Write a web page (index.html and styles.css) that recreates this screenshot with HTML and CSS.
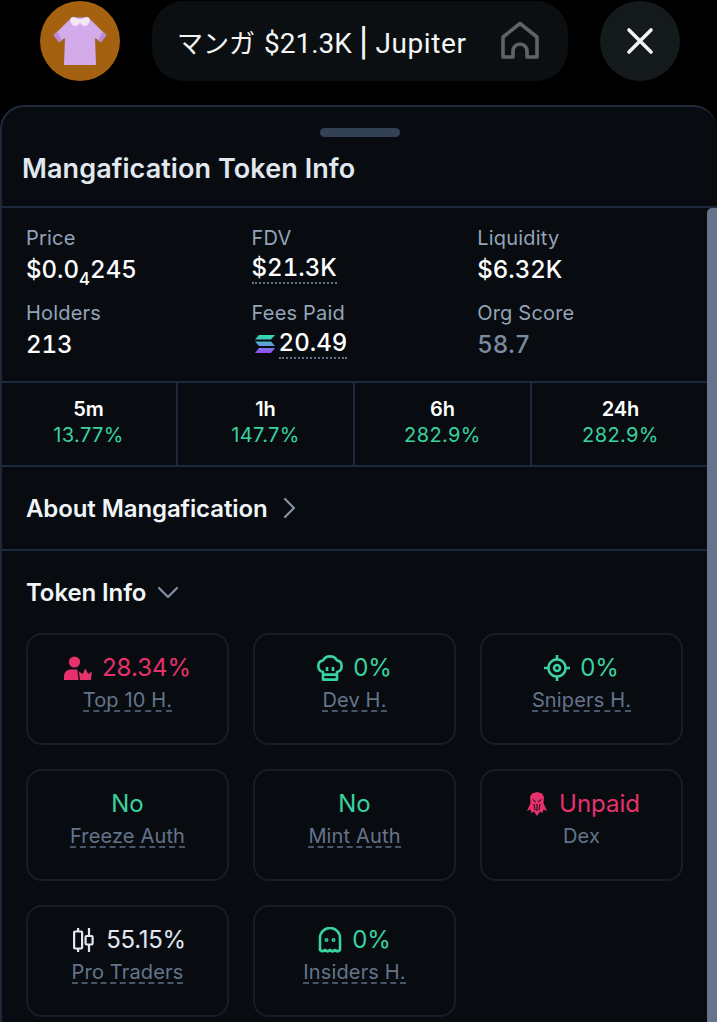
FILE: index.html
```html
<!DOCTYPE html>
<html lang="en">

<head>
    <meta charset="UTF-8">
    <meta name="viewport" content="width=device-width, initial-scale=1.0">
    <title>Mangafication Token Info</title>
    <link rel="stylesheet" href="styles.css">
</head>

<body>
    <div class="topbar">
        <div class="avatar">
            <svg width="60" height="60" viewBox="0 0 60 60">
                <path d="M19 9 L41 9 L56 24 L51 31 L45 27 L46 53 Q46 54 45 54 L15 54 Q14 54 14 53 L15 27 L9 31 L4 24 Z" fill="#d3aaea"/>
                <path d="M3.5 24 L9 31.5 L12 29.5 L7 20.5 Z M56.5 24 L51 31.5 L48 29.5 L53 20.5 Z" fill="#b98ad6"/>
                <path d="M22 6 H38 V10 H22 Z" fill="#a77bc4"/>
                <path d="M20 8 Q21 6 24 6 Q30 9 36 6 Q39 6 40 8 Q39 15 35 15 Q32 15 30 11.5 Q28 15 25 15 Q21 15 20 8 Z" fill="#f1e8f6"/>
            </svg>
        </div>
        <div class="title-pill">
            <span class="pill-text"><span class="pill-kana">マンガ</span> $21.3K <span class="pill-sep">|</span> <span class="pill-site">Jupiter</span></span>
            <svg class="home-icon" width="40" height="40" viewBox="0 0 40 40" fill="none" stroke="#5f6363" stroke-width="3.6">
                <path d="M3 36 V16 L20 2.5 L37 16 V36 H27 V30 A7 7 0 0 0 13 30 V36 Z" stroke-linejoin="round"/>
            </svg>
        </div>
        <div class="close-btn">
            <svg width="28" height="28" viewBox="0 0 28 28" stroke="#f2f5f5" stroke-width="3.6" stroke-linecap="round">
                <path d="M3 3 L25 25 M25 3 L3 25"/>
            </svg>
        </div>
    </div>

    <div class="sheet">
        <div class="scroll-thumb"></div>
        <div class="sheet-head">
            <div class="handle"></div>
            <h2 class="sheet-title">Mangafication Token Info</h2>
        </div>

        <div class="stats">
            <div class="stat">
                <div class="stat-label">Price</div>
                <div class="stat-value">$0.0<sub>4</sub>245</div>
            </div>
            <div class="stat">
                <div class="stat-label">FDV</div>
                <div class="stat-value"><span class="dotted">$21.3K</span></div>
            </div>
            <div class="stat">
                <div class="stat-label">Liquidity</div>
                <div class="stat-value">$6.32K</div>
            </div>
            <div class="stat">
                <div class="stat-label">Holders</div>
                <div class="stat-value">213</div>
            </div>
            <div class="stat">
                <div class="stat-label">Fees Paid</div>
                <div class="stat-value">
                    <svg class="sol-icon" width="20" height="18" viewBox="0 0 20 18">
                        <defs>
                            <linearGradient id="solGrad" x1="0" y1="0" x2="0" y2="1">
                                <stop offset="0" stop-color="#2fe0b0"/>
                                <stop offset="0.5" stop-color="#5aa5d0"/>
                                <stop offset="1" stop-color="#9a45f5"/>
                            </linearGradient>
                        </defs>
                        <path d="M4 0 H20 L16 4.5 H0 Z M0 6.5 H16 L20 11 H4 Z M4 13 H20 L16 18 H0 Z" fill="url(#solGrad)"/>
                    </svg><span class="dotted">20.49</span>
                </div>
            </div>
            <div class="stat">
                <div class="stat-label">Org Score</div>
                <div class="stat-value muted">58.7</div>
            </div>
        </div>

        <div class="changes">
            <div class="change">
                <div class="change-time">5m</div>
                <div class="change-pct">13.77%</div>
            </div>
            <div class="change">
                <div class="change-time">1h</div>
                <div class="change-pct">147.7%</div>
            </div>
            <div class="change">
                <div class="change-time">6h</div>
                <div class="change-pct">282.9%</div>
            </div>
            <div class="change">
                <div class="change-time">24h</div>
                <div class="change-pct">282.9%</div>
            </div>
        </div>

        <div class="about">
            <span>About Mangafication</span>
            <svg width="14" height="22" viewBox="0 0 14 22" fill="none" stroke="#8490a3" stroke-width="2.2" stroke-linecap="round" stroke-linejoin="round">
                <path d="M3 2 L12 11 L3 20"/>
            </svg>
        </div>

        <div class="token-info">
            <div class="token-head">
                <span>Token Info</span>
                <svg width="22" height="14" viewBox="0 0 22 14" fill="none" stroke="#8490a3" stroke-width="2.2" stroke-linecap="round" stroke-linejoin="round">
                    <path d="M2 3 L11 12 L20 3"/>
                </svg>
            </div>

            <div class="cards">
                <div class="card">
                    <div class="card-value pink">
                        <svg width="28" height="24" viewBox="0 0 28 24" fill="currentColor">
                            <circle cx="10.5" cy="6" r="5.6"/>
                            <path d="M0 24 V20.5 Q0 14.5 6 13.5 L13 13.5 Q14 14.5 13.6 16 L14.6 24 Z"/>
                            <path d="M16 24 L14.8 15.5 L18.6 18 L21.4 12.5 L24.2 18 L28 15.5 L26.8 24 Z"/>
                        </svg>
                        28.34%
                    </div>
                    <div class="card-label"><span class="dashed">Top 10 H.</span></div>
                </div>
                <div class="card">
                    <div class="card-value green">
                        <svg width="26" height="26" viewBox="0 0 26 26" fill="none" stroke="currentColor" stroke-width="2.6" stroke-linejoin="round">
                            <path d="M6 17 Q1 16 1.4 10.5 Q1.6 6 6 5.5 Q8 1.4 13 1.4 Q18 1.4 20 5.5 Q24.4 6 24.6 10.5 Q25 16 20 17 V24.6 H6 Z"/>
                            <path d="M6 19.6 H20 M10 12 V16 M16 12 V16"/>
                        </svg>
                        0%
                    </div>
                    <div class="card-label"><span class="dashed">Dev H.</span></div>
                </div>
                <div class="card">
                    <div class="card-value green">
                        <svg width="26" height="26" viewBox="0 0 26 26" fill="none" stroke="currentColor" stroke-width="2.6">
                            <circle cx="13" cy="13" r="8.6"/>
                            <circle cx="13" cy="13" r="3"/>
                            <path d="M13 0 V4.4 M13 21.6 V26 M0 13 H4.4 M21.6 13 H26"/>
                        </svg>
                        0%
                    </div>
                    <div class="card-label"><span class="dashed">Snipers H.</span></div>
                </div>
                <div class="card">
                    <div class="card-value green">No</div>
                    <div class="card-label"><span class="dashed">Freeze Auth</span></div>
                </div>
                <div class="card">
                    <div class="card-value green">No</div>
                    <div class="card-label"><span class="dashed">Mint Auth</span></div>
                </div>
                <div class="card">
                    <div class="card-value pink wide-gap">
                        <svg width="20" height="24" viewBox="0 0 20 24" fill="currentColor">
                            <path d="M10 0 L15 1.5 L17 5 L16.5 11 L20 19 L16.5 17.5 L15.5 21 L13 19.5 L10 24 L7 19.5 L4.5 21 L3.5 17.5 L0 19 L3.5 11 L3 5 L5 1.5 Z"/>
                            <path d="M5.5 7.5 L9 10 M14.5 7.5 L11 10 M10 12 V19 M7 12 L8 18 M13 12 L12 18" fill="none" stroke="#080c10" stroke-width="1"/>
                        </svg>
                        Unpaid
                    </div>
                    <div class="card-label">Dex</div>
                </div>
                <div class="card">
                    <div class="card-value light wide-gap">
                        <svg width="21" height="24" viewBox="0 0 21 24" fill="none" stroke="currentColor" stroke-width="2.2">
                            <rect x="1.1" y="3.5" width="8" height="17" rx="1"/>
                            <path d="M5.1 0 V3.5 M5.1 20.5 V24 M16 0 V24"/>
                            <rect x="12.6" y="8" width="7" height="8.5" rx="1" fill="#080c10"/>
                        </svg>
                        55.15%
                    </div>
                    <div class="card-label"><span class="dashed">Pro Traders</span></div>
                </div>
                <div class="card">
                    <div class="card-value green">
                        <svg width="24" height="26" viewBox="0 0 24 26" fill="none" stroke="currentColor" stroke-width="2.6" stroke-linejoin="round">
                            <path d="M2 23 V11 A10 10 0 0 1 22 11 V23 Q19.5 25.5 17 23 Q14.5 25.5 12 23 Q9.5 25.5 7 23 Q4.5 25.5 2 23 Z"/>
                            <circle cx="8.5" cy="13" r="0.7"/>
                            <circle cx="15.5" cy="13" r="0.7"/>
                        </svg>
                        0%
                    </div>
                    <div class="card-label"><span class="dashed">Insiders H.</span></div>
                </div>
            </div>
        </div>
    </div>
</body>

</html>
```

FILE: styles.css
```css
body {
    margin: 0;
    height: 1022px;
    overflow: hidden;
    background: #000;
    font-family: 'Inter', 'Noto Sans CJK JP', sans-serif;
    color: #fff;
}

.topbar {
    display: flex;
    justify-content: space-between;
    align-items: center;
    height: 80px;
    padding: 1px 37px 24px 40px;
}

.avatar {
    width: 80px;
    height: 80px;
    border-radius: 50%;
    background: #a4610f;
    display: flex;
    align-items: center;
    justify-content: center;
}

.title-pill {
    width: 416px;
    height: 80px;
    box-sizing: border-box;
    padding: 0 28px 0 25px;
    border-radius: 32px;
    background: #0c0f11;
    display: flex;
    align-items: center;
    justify-content: space-between;
}

.pill-text {
    font-family: 'Roboto', 'Noto Sans CJK JP', sans-serif;
    font-size: 28px;
    color: #f4f6f6;
    white-space: nowrap;
}

.pill-kana {
    font-size: 26px;
    margin-right: 2px;
}

.pill-sep {
    font-family: 'Inter', sans-serif;
    font-weight: 500;
}

.pill-site {
    letter-spacing: 0.6px;
}

.close-btn {
    width: 80px;
    height: 80px;
    border-radius: 50%;
    background: #141a1b;
    display: flex;
    align-items: center;
    justify-content: center;
}

.sheet {
    position: relative;
    height: 917px;
    box-sizing: border-box;
    background: #080c10;
    border: 2px solid #1e293b;
    border-bottom: none;
    border-right: none;
    border-radius: 24px 24px 0 0;
    overflow: hidden;
}

.scroll-thumb {
    position: absolute;
    top: 101px;
    right: 0;
    width: 10px;
    bottom: 0;
    background: #64748b;
    border-radius: 5px 0 0 0;
}

.sheet-head {
    box-sizing: border-box;
    height: 101px;
    padding-top: 21px;
    border-bottom: 2px solid #1e293b;
}

.handle {
    width: 80px;
    height: 9px;
    margin: 0 auto;
    border-radius: 5px;
    background: #334155;
}

.sheet-title {
    margin: 16px 0 0 20px;
    font-size: 27px;
    line-height: 32px;
    font-weight: 600;
    letter-spacing: 0.08px;
    color: #e2e8f0;
}

.stats {
    display: grid;
    grid-template-columns: repeat(3, 225.6px);
    align-content: start;
    row-gap: 15px;
    height: 175px;
    box-sizing: border-box;
    padding: 18px 0 0 24px;
    border-bottom: 2px solid #1e293b;
}

.stat-label {
    font-size: 20px;
    line-height: 24px;
    letter-spacing: 0.2px;
    color: #94a3b8;
}

.stat-value {
    display: flex;
    align-items: center;
    font-size: 24px;
    line-height: 32px;
    font-weight: 450;
    font-variant-numeric: tabular-nums;
    color: #fff;
    margin-top: 4px;
}

.stat-value sub {
    font-size: 17px;
    line-height: 1;
    align-self: flex-end;
    margin-bottom: -2px;
}

.stat-value.muted {
    color: #7c8aa0;
}

.dotted {
    border-bottom: 2px dotted #64748b;
    line-height: 28px;
}

.sol-icon {
    margin: 0 4px 0 3px;
}

.changes {
    display: grid;
    grid-template-columns: repeat(4, 1fr);
    height: 82px;
    margin-left: -1px;
    padding-right: 8px;
    border-bottom: 2px solid #1e293b;
}

.change {
    display: flex;
    flex-direction: column;
    align-items: center;
    justify-content: center;
    padding-bottom: 4px;
    border-right: 2px solid #1e293b;
}

.change:last-child {
    border-right: none;
}

.change-time {
    font-size: 20px;
    line-height: 24px;
    font-weight: 600;
}

.change-pct {
    font-size: 20px;
    line-height: 24px;
    color: #3ad29f;
    margin-top: 2px;
    letter-spacing: 0.4px;
}

.about {
    display: flex;
    align-items: center;
    gap: 14px;
    height: 82px;
    padding-left: 24px;
    font-size: 24px;
    font-weight: 600;
    letter-spacing: -0.1px;
    color: #f1f5f9;
    border-bottom: 2px solid #1e293b;
}

.token-info {
    padding: 0 0 0 24px;
}

.token-head {
    display: flex;
    align-items: center;
    gap: 11px;
    height: 82px;
    font-size: 24px;
    font-weight: 600;
    letter-spacing: -0.1px;
    color: #f1f5f9;
}

.cards {
    display: grid;
    grid-template-columns: repeat(3, 203px);
    grid-auto-rows: 112px;
    gap: 24px;
}

.card {
    box-sizing: border-box;
    border: 2px solid #171d27;
    border-radius: 16px;
    padding: 18px 0 0;
    text-align: center;
}

.card-value {
    display: flex;
    align-items: center;
    justify-content: center;
    gap: 10px;
    font-size: 24px;
    line-height: 30px;
}

.card-value.wide-gap {
    gap: 12px;
    padding-left: 4px;
}

.card-value.pink {
    color: #e6316c;
}

.card-value.green {
    color: #3ad29f;
}

.card-value.light {
    color: #e2e8f0;
    letter-spacing: -0.3px;
}

.card-label {
    margin-top: 3px;
    font-size: 20px;
    line-height: 28px;
    letter-spacing: 0.15px;
    color: #64748b;
}

.dashed {
    display: inline-block;
    line-height: 20px;
    border-bottom: 2px dashed #475569;
}
```
